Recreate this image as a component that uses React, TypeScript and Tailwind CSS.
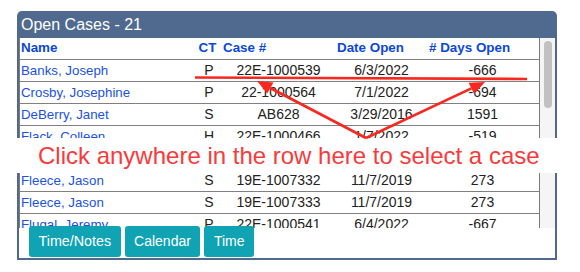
import React from "react";

const rows = [
  { name: "Banks, Joseph", ct: "P", cs: "22E-1000539", date: "6/3/2022", days: "-666" },
  { name: "Crosby, Josephine", ct: "P", cs: "22-1000564", date: "7/1/2022", days: "-694" },
  { name: "DeBerry, Janet", ct: "S", cs: "AB628", date: "3/29/2016", days: "1591" },
  { name: "Flack, Colleen", ct: "H", cs: "22E-1000466", date: "1/7/2022", days: "-519" },
  { name: "Fleece, Jason", ct: "S", cs: "19E-1007331", date: "11/7/2019", days: "273" },
  { name: "Fleece, Jason", ct: "S", cs: "19E-1007332", date: "11/7/2019", days: "273" },
  { name: "Fleece, Jason", ct: "S", cs: "19E-1007333", date: "11/7/2019", days: "273" },
  { name: "Flugal, Jeremy", ct: "P", cs: "22E-1000541", date: "6/4/2022", days: "-667" },
];

export default function App() {
  return (
    <div className="relative w-[580px] h-[272px] bg-white overflow-hidden font-['Liberation_Sans',Arial,sans-serif]">
      <div className="pl-[17px] pt-[11px]">
        <div className="w-[540px]">
          <div className="h-[27px] bg-[#4f6a8e] rounded-t-[5px] text-white text-[16px] pl-[4px] flex items-center">
            Open Cases - 21
          </div>
          <div className="border-x-2 border-b-2 border-[#4f6a8e] bg-white">
            <div className="flex h-[190px]">
              <div className="flex-1 border-x border-[#7a7a7a] overflow-hidden">
                <div className="grid grid-cols-[175px_25px_115px_93px_111px] h-[22px] items-center border-b border-[#808080] text-[13.4px] font-bold text-[#0b47dc]">
                  <div className="pl-[1px]">Name</div>
                  <div className="text-center">CT</div>
                  <div className="pl-[3px]">Case #</div>
                  <div className="pl-[2px]">Date Open</div>
                  <div className="pl-[1px]">
                    # Days Open
                  </div>
                </div>
                {rows.map((r, i) => (
                  <div
                    key={i}
                    className="grid grid-cols-[175px_25px_115px_93px_111px] h-[22px] items-center border-b border-[#808080] text-[14px] text-[#222]"
                  >
                    <div className="pl-[1px] text-[13.3px] text-[#1a52e2]">{r.name}</div>
                    <div className="text-center pl-[3px]">{r.ct}</div>
                    <div className="text-center pl-[2px]">{r.cs}</div>
                    <div className="text-center">{r.date}</div>
                    <div className="text-center pr-[2px]">{r.days}</div>
                  </div>
                ))}
              </div>
              <div className="w-[15px] bg-[#f5f5f5] pt-[3px] flex justify-center">
                <div className="w-[8px] h-[67px] rounded-full bg-[#c1c1c1]" />
              </div>
            </div>
            <div className="relative -mt-[2px] flex gap-[4px] pl-[10px] pb-[1px]">
              <button className="h-[31px] px-[9.5px] rounded-[3px] bg-[#0fa3b4] text-white text-[14.3px]">
                Time/Notes
              </button>
              <button className="h-[31px] px-[9.5px] rounded-[3px] bg-[#0fa3b4] text-white text-[14px]">
                Calendar
              </button>
              <button className="h-[31px] px-[9.5px] rounded-[3px] bg-[#0fa3b4] text-white text-[14px]">
                Time
              </button>
            </div>
          </div>
        </div>
      </div>

      <div className="absolute left-0 right-0 top-[138px] h-[35px] bg-white flex items-center pl-[38px] text-[24px] text-[#fa3a3a] whitespace-nowrap">
        Click anywhere in the row here to select a case
      </div>

      <svg className="absolute inset-0 pointer-events-none" width="580" height="272" viewBox="0 0 580 272">
        <line x1="195" y1="77.5" x2="527" y2="79" stroke="#f8281e" strokeWidth="2.6" />
        <line x1="366" y1="138" x2="270.3" y2="88" stroke="#f8281e" strokeWidth="2.6" />
        <polygon points="257,81 273.5,82.4 267.3,93.6" fill="#f8281e" />
        <line x1="366" y1="138" x2="471.4" y2="88.4" stroke="#f8281e" strokeWidth="2.6" />
        <polygon points="485,82 474.2,94 468.6,82.8" fill="#f8281e" />
      </svg>
    </div>
  );
}
